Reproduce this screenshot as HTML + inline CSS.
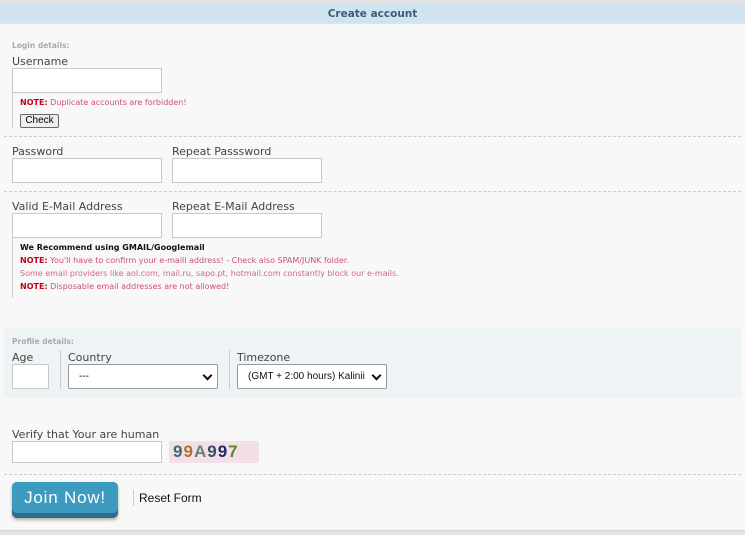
<!DOCTYPE html>
<html><head><meta charset="utf-8"><style>
*{box-sizing:border-box;margin:0;padding:0}
body{width:745px;height:535px;background:#f8f8f8;font-family:"DejaVu Sans","Liberation Sans",sans-serif;position:relative;overflow:hidden;color:#444}
.a{position:absolute}
.top{left:0;top:0;width:745px;height:4px;background:#e4e4e4}
.hdr{left:0;top:4px;width:745px;height:20px;background:#cfe3f1;text-align:center;font-size:10.5px;font-weight:bold;color:#3c5d73;line-height:20px;border-bottom:1px solid #dde6ec}
.sm{font-size:7.5px;color:#aaa;font-weight:bold}
.lbl{font-size:11px;color:#444}
.in{background:#fff;border:1px solid #c8c8c8}
.note{font-size:8px;color:#d0506e}
.note b{color:#c8001a}
.dash{left:4px;width:737px;border-top:1px dashed #ccc;height:0}
.vl{width:1px;background:#ccc}
.sel{background:#fff;border:1px solid #999;border-radius:2px;font-family:"Liberation Sans",sans-serif;font-size:10px;color:#111;padding-left:10px;line-height:23px}
.sel:after{content:"";position:absolute;right:6px;top:7px;width:5px;height:5px;border-right:2px solid #111;border-bottom:2px solid #111;transform:rotate(45deg)}
</style></head><body>
<div class="a top"></div>
<div class="a hdr">Create account</div>
<div class="a sm" style="left:12px;top:41px">Login details:</div>
<div class="a lbl" style="left:12px;top:55px">Username</div>
<div class="a in" style="left:12px;top:68px;width:150px;height:25px"></div>
<div class="a vl" style="left:12px;top:93px;height:35px"></div>
<div class="a note" style="left:20px;top:98px"><b>NOTE:</b> Duplicate accounts are forbidden!</div>
<div class="a" style="left:20px;top:114px;width:39px;height:14px;border:1px solid #666;border-radius:2px;background:#efefef;font:10px 'Liberation Sans',sans-serif;color:#000;text-align:center;line-height:12px">Check</div>
<div class="a dash" style="top:136px"></div>
<div class="a lbl" style="left:12px;top:145px">Password</div>
<div class="a lbl" style="left:172px;top:145px">Repeat Passsword</div>
<div class="a in" style="left:12px;top:158px;width:150px;height:25px"></div>
<div class="a in" style="left:172px;top:158px;width:150px;height:25px"></div>
<div class="a dash" style="top:191px"></div>
<div class="a lbl" style="left:12px;top:200px">Valid E-Mail Address</div>
<div class="a lbl" style="left:172px;top:200px">Repeat E-Mail Address</div>
<div class="a in" style="left:12px;top:213px;width:150px;height:25px"></div>
<div class="a in" style="left:172px;top:213px;width:150px;height:25px"></div>
<div class="a vl" style="left:12px;top:238px;height:60px"></div>
<div class="a" style="left:20px;top:243px;font-size:8px;font-weight:bold;color:#111">We Recommend using GMAIL/Googlemail</div>
<div class="a note" style="left:20px;top:256px"><b>NOTE:</b> You'll have to confirm your e-maill address! - Check also SPAM/JUNK folder.</div>
<div class="a note" style="left:20px;top:269px;color:#d06a80">Some email providers like aol.com, mail.ru, sapo.pt, hotmail.com constantly block our e-mails.</div>
<div class="a note" style="left:20px;top:282px"><b>NOTE:</b> Disposable email addresses are not allowed!</div>
<div class="a" style="left:4px;top:328px;width:737px;height:70px;background:#eef3f6"></div>
<div class="a sm" style="left:12px;top:337px">Profile details:</div>
<div class="a lbl" style="left:12px;top:351px">Age</div>
<div class="a lbl" style="left:68px;top:351px">Country</div>
<div class="a lbl" style="left:237px;top:351px">Timezone</div>
<div class="a vl" style="left:60px;top:350px;height:39px"></div>
<div class="a vl" style="left:229px;top:350px;height:39px"></div>
<div class="a in" style="left:12px;top:364px;width:37px;height:25px"></div>
<div class="a sel" style="left:68px;top:364px;width:150px;height:25px">---</div>
<div class="a sel" style="left:237px;top:364px;width:150px;height:25px">(GMT + 2:00 hours) Kalinii</div>
<div class="a lbl" style="left:12px;top:428px">Verify that Your are human</div>
<div class="a in" style="left:12px;top:441px;width:150px;height:22px"></div>
<div class="a" style="left:169px;top:441px;width:90px;height:22px;background:#f2dfe8;font:bold 17px 'Liberation Sans',sans-serif;line-height:22px;padding-left:4px;letter-spacing:1px"><span style="color:#3a6a70">9</span><span style="color:#b07030">9</span><span style="color:#6a8070">A</span><span style="color:#305060">9</span><span style="color:#1a2a60">9</span><span style="color:#5a8a30">7</span></div>
<div class="a dash" style="top:474px"></div>
<div class="a" style="left:12px;top:482px;width:106px;height:36px;border-radius:5px;background:#2d6f88;box-shadow:0 2px 3px rgba(0,0,0,.3)"></div>
<div class="a" style="left:12px;top:482px;width:106px;height:31px;border-radius:5px;background:#3d9bbf;color:#fff;font:17px 'Liberation Sans',sans-serif;text-align:center;line-height:31px;letter-spacing:.8px">Join Now!</div>
<div class="a vl" style="left:133px;top:490px;height:16px"></div>
<div class="a" style="left:139px;top:491px;font:12px 'Liberation Sans',sans-serif;color:#111">Reset Form</div>
<div class="a" style="left:0;top:530px;width:745px;height:5px;background:#e4e4e4;border-top:1px solid #d4d4d4"></div>
</body></html>
